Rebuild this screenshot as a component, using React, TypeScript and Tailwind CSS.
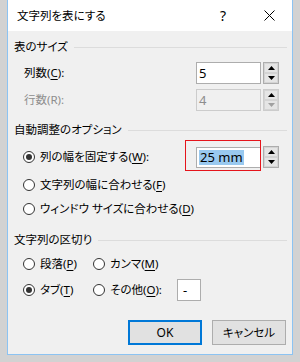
import React from 'react';

const font = "font-['Noto_Sans','Noto_Sans_CJK_JP',sans-serif] [font-feature-settings:'palt']";

const Radio = ({ checked }: { checked?: boolean }) => (
  <span className="w-[12px] h-[12px] rounded-full border border-[#333333] bg-white flex items-center justify-center shrink-0">
    {checked && <span className="w-[6px] h-[6px] rounded-full bg-[#333333]" />}
  </span>
);

const Arrow = ({ up, gray }: { up?: boolean; gray?: boolean }) => (
  <svg width="7" height="4" viewBox="0 0 7 4">
    <polygon points={up ? '3.5,0 7,4 0,4' : '0,0 7,0 3.5,4'} fill={gray ? '#a0a0a0' : '#000'} />
  </svg>
);

const Spinner = ({ disabled }: { disabled?: boolean }) => (
  <div className={`w-[16px] h-[22px] flex flex-col border ${disabled ? 'border-[#cccccc]' : 'border-[#adadad]'} bg-[#f0f0f0]`}>
    <div className="flex-1 flex items-center justify-center bg-[#e5e5e5] border border-[#d4d4d4]">
      <Arrow up />
    </div>
    <div className="flex-1 flex items-center justify-center bg-[#e5e5e5] border border-[#d4d4d4]">
      <Arrow gray={disabled} />
    </div>
  </div>
);

const Heading = ({ children }: { children: React.ReactNode }) => (
  <div className="h-[16px] flex items-center gap-[6px]">
    <span className="text-[11.5px] leading-none whitespace-nowrap">{children}</span>
    <div className="flex-1 h-px bg-[#dcdcdc]" />
  </div>
);

const Key = ({ k }: { k: string }) => <span className="underline underline-offset-2">{k}</span>;

export default function App() {
  return (
    <div className={`w-[300px] h-[362px] bg-[#d2d2d2] ${font} text-black`}>
      <div className="ml-[7px] w-[286px] h-[355px] border-x border-b border-[#8cc3f2] flex flex-col">
        {/* title bar */}
        <div className="h-[31px] bg-white flex items-center pl-[9px] pr-[17px]">
          <span className="text-[11.5px] leading-none flex-1">文字列を表にする</span>
          <span className="text-[14px] leading-none mr-[38px]">?</span>
          <svg width="11" height="11" viewBox="0 0 11 11">
            <path d="M0.5 0.5 L10.5 10.5 M10.5 0.5 L0.5 10.5" stroke="#000" strokeWidth="1" />
          </svg>
        </div>

        {/* body */}
        <div className="flex-1 bg-[#f0f0f0] pl-[6px] pr-[5px] pt-[8px] flex flex-col text-[11.5px] leading-none">
          <Heading>表のサイズ</Heading>
          <div className="mt-[7px] h-[22px] flex items-center pl-[10px] pr-[8px]">
            <span className="flex-1">列数(<Key k="C" />):</span>
            <div className="w-[65px] h-[22px] bg-white border border-[#adadad] flex items-center pl-[2px] text-[13px]">5</div>
            <div className="ml-[2px]"><Spinner /></div>
          </div>
          <div className="mt-[5px] h-[22px] flex items-center pl-[10px] pr-[8px] text-[#8d8d8d]">
            <span className="flex-1">行数(R):</span>
            <div className="w-[65px] h-[22px] bg-[#f0f0f0] border border-[#cccccc] flex items-center pl-[2px] text-[13px]">4</div>
            <div className="ml-[2px]"><Spinner disabled /></div>
          </div>

          <div className="mt-[11px]">
            <Heading>自動調整のオプション</Heading>
          </div>
          <div className="mt-[8px] h-[22px] flex items-center pl-[9px] pr-[8px] relative">
            <Radio checked />
            <span className="ml-[5px] flex-1">列の幅を固定する(<Key k="W" />):</span>
            <div className="w-[65px] h-[21px] bg-white border border-[#adadad] flex items-center pl-[2px] text-[13px]">
              <span className="bg-[#99c9ef] px-px leading-[15px]">25 mm</span>
            </div>
            <div className="ml-[2px]"><Spinner /></div>
            <div className="absolute left-[171px] top-[-6px] w-[76px] h-[31px] border border-[#e5141b]" />
          </div>
          <div className="mt-[6px] h-[22px] flex items-center pl-[9px]">
            <Radio />
            <span className="ml-[5px]">文字列の幅に合わせる(<Key k="F" />)</span>
          </div>
          <div className="mt-[2px] h-[22px] flex items-center pl-[9px]">
            <Radio />
            <span className="ml-[5px]">ウィンドウ サイズに合わせる(<Key k="D" />)</span>
          </div>

          <div className="mt-[12px]">
            <Heading>文字列の区切り</Heading>
          </div>
          <div className="mt-[5px] h-[22px] flex items-center pl-[9px]">
            <div className="w-[70px] flex items-center">
              <Radio />
              <span className="ml-[5px]">段落(<Key k="P" />)</span>
            </div>
            <Radio />
            <span className="ml-[5px]">カンマ(<Key k="M" />)</span>
          </div>
          <div className="mt-[4px] h-[22px] flex items-center pl-[9px]">
            <div className="w-[70px] flex items-center">
              <Radio checked />
              <span className="ml-[5px]">タブ(<Key k="T" />)</span>
            </div>
            <Radio />
            <span className="ml-[5px] w-[67px]">その他(<Key k="O" />):</span>
            <div className="w-[24px] h-[22px] bg-white border border-[#adadad] flex items-center pl-[5px] text-[13px]">-</div>
          </div>

          <div className="mt-[19px] h-[25px] flex justify-end gap-[10px] pr-[1px]">
            <button className="w-[74px] h-[25px] bg-[#e1e1e1] border-2 border-[#0078d7] text-[12px]">OK</button>
            <button className="w-[74px] h-[25px] bg-[#e1e1e1] border border-[#adadad] text-[11.5px]">キャンセル</button>
          </div>
        </div>
      </div>
    </div>
  );
}
